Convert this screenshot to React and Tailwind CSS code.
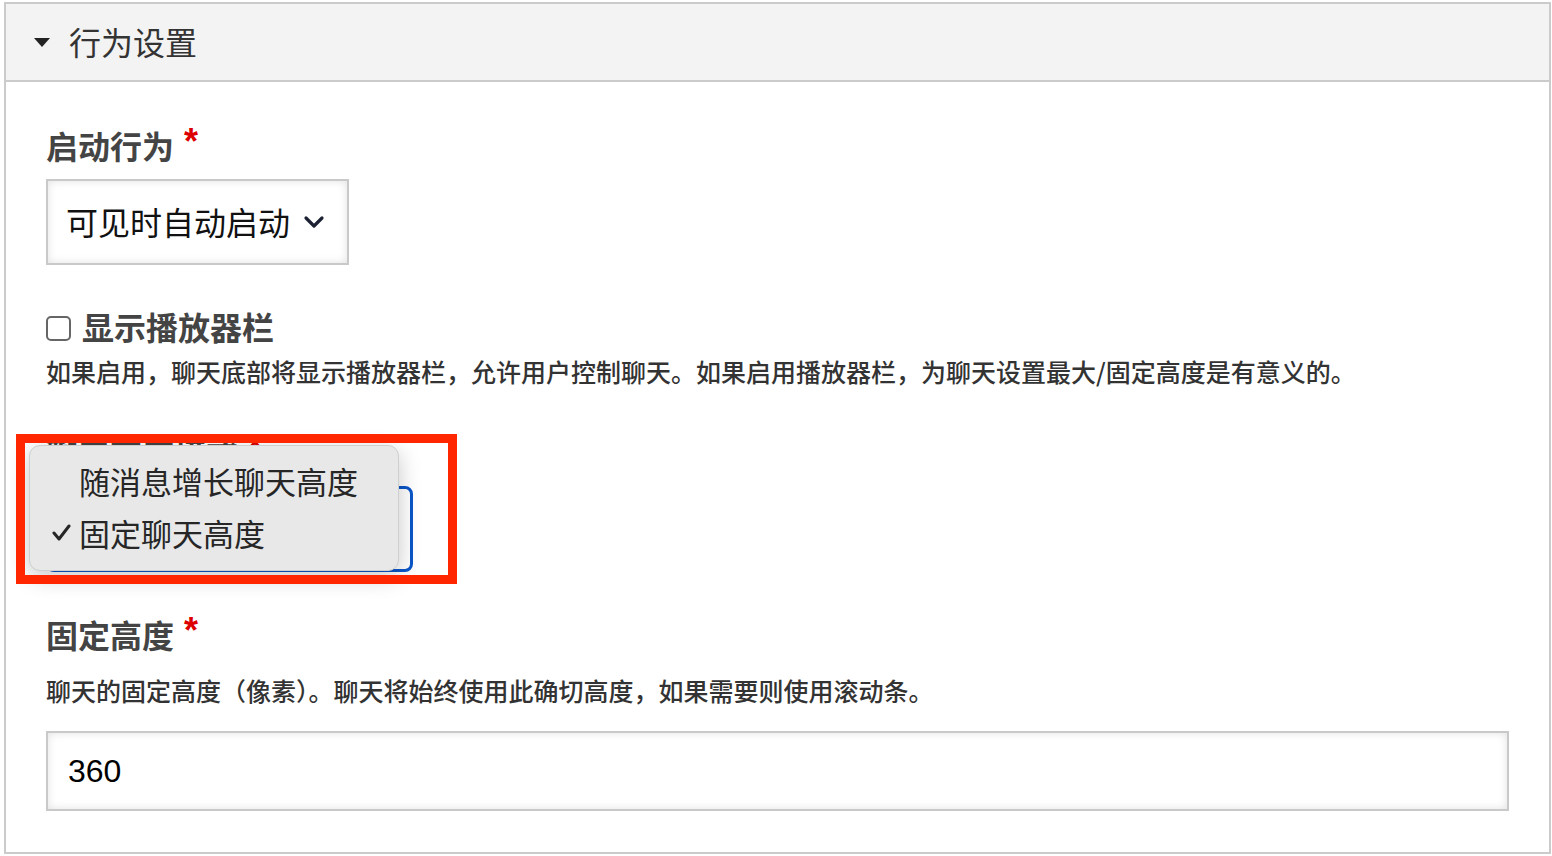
const cjk = { fontFamily: '"Noto Sans CJK SC", "Noto Sans", sans-serif' }

function Required() {
  return (
    <span
      className="ml-[10px] text-[36px] font-bold text-[#dd0000] align-[5px]"
      style={{ fontFamily: '"Liberation Sans", Arial, sans-serif' }}
    >
      *
    </span>
  )
}

function Label({ children, className = "" }) {
  return (
    <div className={"h-[40px] leading-[40px] text-[32px] font-bold text-[#444] whitespace-nowrap " + className}>
      {children}
      <Required />
    </div>
  )
}

function Chevron() {
  return (
    <svg width="22" height="14" viewBox="0 0 22 14" className="shrink-0">
      <polyline points="3,3 11,11 19,3" fill="none" stroke="#1c2233" strokeWidth="3.2" strokeLinecap="round" strokeLinejoin="round" />
    </svg>
  )
}

export default function App() {
  return (
    <div className="w-[1552px] h-[856px] bg-white pt-[2px] pl-[4px] overflow-hidden" style={cjk}>
      <div className="w-[1547px] h-[852px] border-2 border-[#cbcbcb] flex flex-col">
        <div className="h-[78px] shrink-0 bg-[#f3f3f3] border-b-2 border-[#cbcbcb] flex items-center pl-[28px]">
          <svg width="16" height="9" viewBox="0 0 16 9">
            <polygon points="0,0 16,0 8,9" fill="#222" />
          </svg>
          <span className="ml-[19px] mb-[2px] text-[32px] leading-none text-[#333]">行为设置</span>
        </div>

        <div className="relative flex-1 px-10 pt-[40px]">
          <Label>启动行为</Label>
          <div className="mt-[17px] w-[303px] h-[86px] border-2 border-[#c9c9c9] shadow-[inset_0_0_8px_rgba(0,0,0,0.12)] flex items-center justify-between pl-[18px] pr-[22px]">
            <span className="mb-[2px] text-[32px] leading-none text-[#111]">可见时自动启动</span>
            <Chevron />
          </div>

          <div className="mt-[41px] h-[40px] flex items-center">
            <div className="mt-[4px] w-[25px] h-[25px] border-2 border-[#666] rounded-[5px] bg-white shrink-0" />
            <span className="ml-[11px] text-[32px] leading-[40px] font-bold text-[#444]">显示播放器栏</span>
          </div>
          <p className="mt-[9px] text-[25px] leading-[32px] font-medium text-[#333] whitespace-nowrap">
            如果启用，聊天底部将显示播放器栏，允许用户控制聊天。如果启用播放器栏，为聊天设置最大/固定高度是有意义的。
          </p>

          <Label className="mt-[42px]">聊天高度模式</Label>
          <div className="mt-[17px] w-[367px] h-[86px] border-[3px] border-[#0a56c8] rounded-[8px] flex items-center justify-between pl-[18px] pr-[22px]">
            <span className="text-[32px] leading-none text-[#111]">固定聊天高度</span>
            <Chevron />
          </div>

          <Label className="mt-[39px]">固定高度</Label>
          <p className="mt-[23px] text-[25px] leading-[32px] font-medium text-[#333] whitespace-nowrap">
            聊天的固定高度（像素）。聊天将始终使用此确切高度，如果需要则使用滚动条。
          </p>
          <div className="mt-[25px] w-full h-[80px] border-2 border-[#c9c9c9] shadow-[inset_0_0_8px_rgba(0,0,0,0.12)] flex items-center pl-[20px]">
            <span className="text-[32px] leading-none text-black" style={{ fontFamily: '"Liberation Sans", Arial, sans-serif' }}>
              360
            </span>
          </div>

          {/* open select menu */}
          <div className="absolute left-[23px] top-[363px] w-[370px] h-[126px] bg-[#e8e8e8] border border-[#cfcfcf] rounded-[11px] shadow-[0_6px_22px_rgba(0,0,0,0.22)] pt-[8px] text-[#262626]">
            <div className="h-[52px] flex items-center pl-[20px]">
              <span className="w-[29px]" />
              <span className="text-[31px] leading-none">随消息增长聊天高度</span>
            </div>
            <div className="h-[52px] flex items-center pl-[20px]">
              <span className="w-[29px] flex items-center pl-[2px]">
                <svg width="19" height="17" viewBox="0 0 19 17">
                  <polyline points="2,9 7,15 17,2" fill="none" stroke="#262626" strokeWidth="3" strokeLinecap="round" strokeLinejoin="round" />
                </svg>
              </span>
              <span className="text-[31px] leading-none">固定聊天高度</span>
            </div>
          </div>

          {/* highlight box */}
          <div className="absolute left-[10px] top-[352px] w-[441px] h-[150px] border-[9px] border-[#ff2600] pointer-events-none" />
        </div>
      </div>
    </div>
  )
}
